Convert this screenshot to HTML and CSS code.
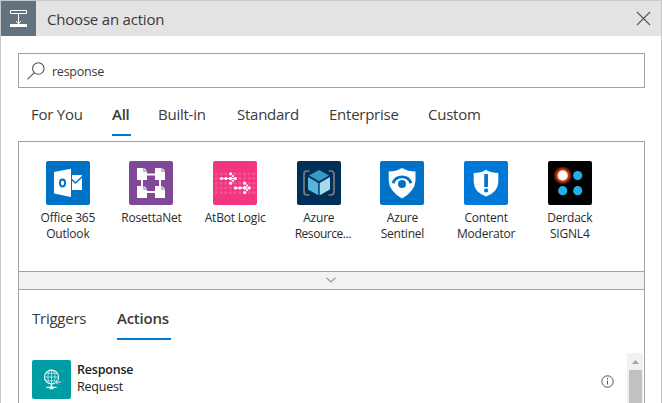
FILE: index.html
```html
<!DOCTYPE html>
<html lang="en">
<head>
<meta charset="utf-8">
<title>Choose an action</title>
<link rel="stylesheet" href="styles.css">
</head>
<body>
<main class="card">
  <header class="header">
    <div class="header-icon">
      <svg width="35" height="35" viewBox="0 0 35 35" fill="none" stroke="#fff">
        <path d="M9.500 9.500h16v3h-16z"/><path d="M17.500 13v10M15 20l2.500 2.800L20 20"/><path d="M9 23h17v3H9z" fill="#fff" stroke="none"/>
      </svg>
    </div>
    <h1>Choose an action</h1>
    <svg class="close" width="15" height="15" viewBox="0 0 15 15" fill="none" stroke="#555" stroke-width="1.1"><path d="M1 1l13 13M14 1L1 14"/></svg>
  </header>
  <div class="search">
    <svg width="18" height="18" viewBox="0 0 18 18" fill="none" stroke="#555" stroke-width="1.1"><circle cx="11.300" cy="6.500" r="5.700"/><path d="M7.300 10.600L.5 17.400"/></svg>
    <span>response</span>
  </div>
  <nav class="tabs">
    <span class="t-foryou">For You</span><span class="t-all selected">All</span><span class="t-built">Built-in</span><span class="t-standard">Standard</span><span class="t-enterprise">Enterprise</span><span class="t-custom">Custom</span>
  </nav>
  <section class="panel">
    <div class="connectors">
      <div class="connector">
        <svg class="tile" viewBox="0 0 44 44"><rect width="44" height="44" rx="2" fill="#0072c6"/><path d="M8 11l17-3.300v28.400L8 32.500z" fill="#fff"/><path d="M26 14h10v15H26z" fill="#fff"/><path d="M26 18.500l3.500 3.500 7-6.500" fill="none" stroke="#0072c6" stroke-width="1.500"/><ellipse cx="16.500" cy="22" rx="2.600" ry="3.500" fill="none" stroke="#0072c6" stroke-width="1.900"/></svg>
        <p>Office 365<br>Outlook</p>
      </div>
      <div class="connector">
        <svg class="tile" viewBox="0 0 44 44"><rect width="44" height="44" rx="2" fill="#804998"/><path d="M13 13.500h18v17.500H13z" fill="none" stroke="#fff" stroke-width="2"/><g fill="#fff"><path id="doc" d="M8 7h6.500v3.500H18V19H8zM15.300 7l2.700 2.700h-2.700z"/><use href="#doc" x="18"/><use href="#doc" y="18"/><use href="#doc" x="18" y="18"/></g></svg>
        <p>RosettaNet</p>
      </div>
      <div class="connector">
        <svg class="tile" viewBox="0 0 44 44">
          <defs><pattern id="dots" x="1" y="10.500" width="4.700" height="4.700" patternUnits="userSpaceOnUse"><circle cx="2.300" cy="2.300" r="1.500" fill="#f4558f"/></pattern></defs>
          <rect width="44" height="44" rx="2" fill="#f1357f"/><path d="M1 10.500h42.300v23.500H1z" fill="url(#dots)"/>
          <g fill="#fff"><g id="arrow"><circle cx="8.500" cy="17.500" r="1.600"/><circle cx="13" cy="17.500" r="1.600"/><circle cx="17.700" cy="17.500" r="1.800"/><circle cx="22.300" cy="17.500" r="1.600"/><circle cx="17.700" cy="12.800" r="1.600"/><circle cx="17.700" cy="22.200" r="1.600"/><circle cx="20" cy="15.200" r="1.100"/><circle cx="20" cy="19.800" r="1.100"/><path d="M8.500 17h13v1h-13z"/></g><use href="#arrow" x="14" y="9.400"/></g>
        </svg>
        <p>AtBot Logic</p>
      </div>
      <div class="connector">
        <svg class="tile" viewBox="0 0 44 44"><rect width="44" height="44" rx="2" fill="#00305a"/><path d="M12.500 10H10q-3 0-3 3v18q0 3 3 3h2.500M31.500 10H34q3 0 3 3v18q0 3-3 3h-2.500" fill="none" stroke="#7b7b7b" stroke-width="1.700"/><path d="M22 9l10 5.500-10 5.700-10-5.700z" fill="#3999c6"/><path d="M11 16l10.300 6v12.300L11 28.500z" fill="#59b4d9"/><path d="M33 16l-10.300 6v12.300L33 28.500z" fill="#a7d9eb"/></svg>
        <p>Azure<br><span class="clipped">Resource...</span></p>
      </div>
      <div class="connector">
        <svg class="tile" viewBox="0 0 44 44"><rect width="44" height="44" rx="2" fill="#0072c6"/><path d="M22 7q6 3.500 13.500 3.500v9Q35 30 22 37.500 9 30 8.700 19.500v-9Q16 10.500 22 7z" fill="#fff"/><path d="M13 22.300a9.500 9.500 0 0 1 18 0" fill="none" stroke="#0072c6" stroke-width="2.800"/><circle cx="22" cy="23" r="4" fill="#0072c6"/></svg>
        <p>Azure<br>Sentinel</p>
      </div>
      <div class="connector">
        <svg class="tile" viewBox="0 0 44 44"><rect width="44" height="44" rx="2" fill="#0078d7"/><path d="M22 8.700Q27 12 34.300 12v9Q34 31 22 35.500 10 31 9.700 21v-9Q17 12 22 8.700z" fill="#fff"/><path d="M20.200 13h3.800v13h-3.800zM20 29.500c0-2.600 4.200-2.600 4.200 0s-4.200 2.600-4.200 0z" fill="#0078d7"/></svg>
        <p>Content<br>Moderator</p>
      </div>
      <div class="connector">
        <svg class="tile" viewBox="0 0 44 44"><defs><radialGradient id="glow"><stop offset=".5" stop-color="#ff6534"/><stop offset=".7" stop-color="#a62d0a"/><stop offset="1" stop-color="#000"/></radialGradient></defs><rect width="44" height="44" rx="2"/><circle cx="14.700" cy="14.500" r="9.500" fill="url(#glow)"/><circle cx="14.700" cy="14.500" r="4.900" fill="#fff"/><g fill="#22aee9"><circle cx="29.700" cy="14.500" r="4.600"/><circle cx="14.700" cy="29.700" r="4.600"/><circle cx="29.700" cy="29.700" r="4.600"/></g></svg>
        <p>Derdack<br>SIGNL4</p>
      </div>
    </div>
    <div class="collapse"><svg width="10" height="6" viewBox="0 0 10 6" fill="none" stroke="#999" stroke-width="1.200"><path d="M.5 .7L5 5 9.500 .7"/></svg></div>
    <div class="subtabs"><span class="s-triggers">Triggers</span><span class="s-actions selected">Actions</span></div>
    <div class="results">
      <div class="result">
        <svg width="39" height="39" viewBox="0 0 39 39" fill="none" stroke="#fff"><rect width="39" height="39" rx="2" fill="#009da5" stroke="none"/><circle cx="19.500" cy="17" r="7" stroke-width="1.100"/><path d="M19.500 10v14M12.500 17h14M14 13.200h11M14 20.800h11" stroke-width=".6"/><ellipse cx="19.500" cy="17" rx="3.600" ry="7" stroke-width=".6"/><path d="M19.500 24v3M14.500 27.400h10" stroke-width="1.400"/><path d="M17.500 28h4" stroke-width="2.500"/><path d="M28.500 22h-5m2.200-2.200L23.500 22l2.200 2.200" stroke="#009da5" stroke-width="2.500"/><path d="M28.500 22h-5m2.200-2.200L23.500 22l2.200 2.200" stroke-width="1"/></svg>
        <div class="result-text"><strong>Response</strong><span>Request</span></div>
        <svg class="info" width="13" height="13" viewBox="0 0 13 13" fill="none" stroke="#555"><circle cx="6.500" cy="6.500" r="5.700"/><path d="M6.500 5.500v4M6.500 3v1.300"/></svg>
      </div>
      <div class="scrollbar"><svg width="16" height="17" viewBox="0 0 16 17"><path d="M5 11l3.500-4 3.500 4z" fill="#a3a3a3"/></svg><div class="thumb"></div></div>
    </div>
  </section>
</main>
</body>
</html>
```
FILE: styles.css
```css
* { box-sizing: border-box; }
body { margin: 0; overflow: hidden; background: #fff; color: #3a3a3a; font-family: "Open Sans", "Noto Sans", sans-serif; }
svg { display: block; flex: none; }
span, h1, strong { white-space: nowrap; }
.card { width: 662px; height: 403px; overflow: hidden; border: 1px solid #c8c8c8; border-bottom: 0; }
.header { display: flex; align-items: center; height: 35px; background: #e3e3e3; }
.header-icon { width: 35px; height: 35px; background: #64717f; }
h1 { margin: 0 0 0 11px; font-size: 15px; line-height: 20px; font-weight: 400; letter-spacing: -.2px; }
.close { margin-left: auto; margin-right: 10px; }
.search { display: flex; align-items: center; width: 627px; height: 35px; margin: 17px 0 0 17px; padding-left: 8px; border: 1px solid #a3a3a3; }
.search span { margin-left: 7px; padding-top: 1px; font-size: 12.5px; letter-spacing: -.25px; }
.tabs { display: flex; height: 48px; padding: 16px 0 0 30px; font-size: 15px; line-height: 21px; letter-spacing: -.25px; }
.tabs span { height: 32px; }
.t-foryou { width: 51px; margin-right: 30px; }
.t-all { width: 19px; margin-right: 27px; }
.t-built { width: 50px; margin-right: 29px; }
.t-standard { width: 61px; margin-right: 31px; }
.t-enterprise { width: 69px; margin-right: 30px; }
.tabs .selected { height: 32px; border-bottom: 2px solid #0078d4; }
.selected { font-weight: 600; }
.panel { width: 627px; height: 262px; margin: 5px 0 0 17px; border: 1px solid #a3a3a3; border-bottom: 0; }
.connectors { display: grid; grid-template-columns: repeat(7, 83.66px); height: 129px; padding: 19px 0 0 7px; }
.connector { display: flex; flex-direction: column; align-items: center; }
.tile { width: 44px; height: 44px; }
.connector p { margin: 5px 0 0; color: #2a2a2a; font-size: 12px; line-height: 16px; letter-spacing: -.2px; text-align: center; white-space: nowrap; }
.clipped { padding-left: 8px; letter-spacing: -.45px; }
.collapse { display: flex; align-items: center; justify-content: center; height: 19px; padding: 0 2px 2px 0; background: #f2f2f2; border-top: 1px solid #a3a3a3; border-bottom: 1px solid #a3a3a3; }
.subtabs { display: flex; height: 63px; padding: 18px 0 0 13px; font-size: 15px; line-height: 21px; letter-spacing: -.25px; }
.subtabs span { height: 32px; }
.s-triggers { width: 55px; margin-right: 30px; }
.s-actions { width: 54px; border-bottom: 2px solid #0078d4; }
.results { display: flex; height: 50px; }
.result { display: flex; align-items: flex-start; width: 608px; padding: 7px 13px 0 13px; }
.result-text { display: flex; flex-direction: column; margin-left: 6px; padding-top: 1px; color: #222; font-size: 12.5px; line-height: 17px; letter-spacing: -.2px; }
.result-text strong { font-weight: 600; }
.info { margin: 15px 0 0 auto; }
.scrollbar { width: 16px; background: #f1f1f1; }
.thumb { width: 13px; height: 33px; margin-left: 2px; background: #c1c1c1; }
```
